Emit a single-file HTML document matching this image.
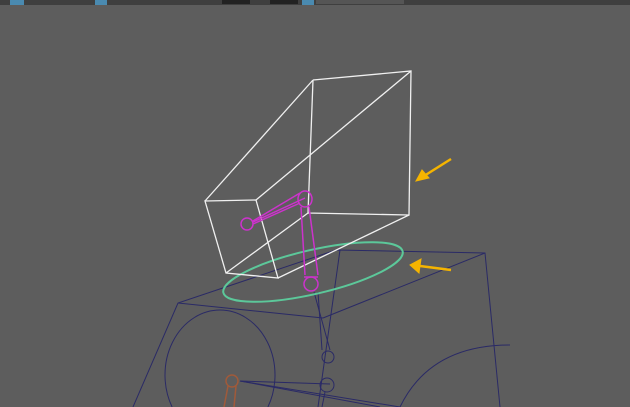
<!DOCTYPE html>
<html><head><style>
html,body{margin:0;padding:0;width:630px;height:407px;overflow:hidden;background:#5d5d5d;}
svg{display:block;}
</style></head><body>
<svg width="630" height="407" viewBox="0 0 630 407" xmlns="http://www.w3.org/2000/svg">
<rect width="630" height="407" fill="#5d5d5d"/>
<rect width="630" height="5" fill="#3f3f3f"/>
<rect x="10" y="0" width="14" height="5" fill="#4a8ab0"/>
<rect x="95" y="0" width="12" height="5" fill="#4a8ab0"/>
<rect x="222" y="0" width="28" height="4" fill="#222"/>
<rect x="270" y="0" width="28" height="4" fill="#222"/>
<rect x="302" y="0" width="12" height="5" fill="#4a8ab0"/>
<rect x="316" y="0" width="88" height="4" fill="#555"/>
<g fill="none" stroke="#2a2a66" stroke-width="1">
<polyline points="133,407 178,303 336,250 485,253 500,407"/>
<line x1="178" y1="303" x2="323" y2="318"/>
<line x1="323" y1="318" x2="485" y2="253"/>
<line x1="340" y1="250" x2="318" y2="407"/>
<path d="M172.1 407 A55 65 0 1 1 267.9 407"/>
<path d="M400 407 Q430 345 510 345"/>
<line x1="314" y1="292" x2="330" y2="350"/>
<line x1="318" y1="292" x2="322" y2="350"/>
<circle cx="328" cy="357" r="6"/>
<circle cx="327" cy="385" r="7"/>
<line x1="240" y1="381" x2="400" y2="407"/>
<line x1="240" y1="381" x2="330" y2="384"/>
<line x1="240" y1="381" x2="380" y2="407"/>
<line x1="325" y1="392" x2="322" y2="407"/>
</g>
<g fill="none" stroke="#a05a3a" stroke-width="1.5">
<circle cx="232" cy="381" r="6"/>
<line x1="228" y1="386" x2="224" y2="407"/>
<line x1="236" y1="386" x2="234" y2="407"/>
</g>
<ellipse cx="313" cy="272" rx="92" ry="22" transform="rotate(-13 313 272)" fill="none" stroke="#5cc89a" stroke-width="2"/>
<g fill="none" stroke="#f0f0f0" stroke-width="1.3">
<polygon points="205,201 256,200 278,278 226,273"/>
<polyline points="313,80 411,71 409,215 308,213 313,80"/>
<line x1="205" y1="201" x2="313" y2="80"/>
<line x1="256" y1="200" x2="411" y2="71"/>
<line x1="226" y1="273" x2="308" y2="213"/>
<line x1="278" y1="278" x2="409" y2="215"/>
</g>
<g fill="none" stroke="#cc33cc" stroke-width="1.5">
<circle cx="247" cy="224" r="6"/>
<ellipse cx="305" cy="199" rx="7" ry="8"/>
<line x1="253" y1="221" x2="300" y2="193"/>
<line x1="253" y1="224" x2="300" y2="203"/>
<line x1="253" y1="222" x2="305" y2="198"/>
<line x1="301" y1="207" x2="305" y2="275"/>
<line x1="309" y1="207" x2="318" y2="275"/>
<circle cx="311" cy="284" r="7"/>
<line x1="304" y1="277" x2="318" y2="277"/>
</g>
<g stroke="#f5b400" stroke-width="2.5" fill="#f5b400">
<line x1="451" y1="159" x2="424" y2="176"/>
<polygon points="416,181 422,170 429,178" stroke-width="1"/>
<line x1="451" y1="270" x2="420" y2="266"/>
<polygon points="410,265 421,259 419,273" stroke-width="1"/>
</g>
</svg>
</body></html>
